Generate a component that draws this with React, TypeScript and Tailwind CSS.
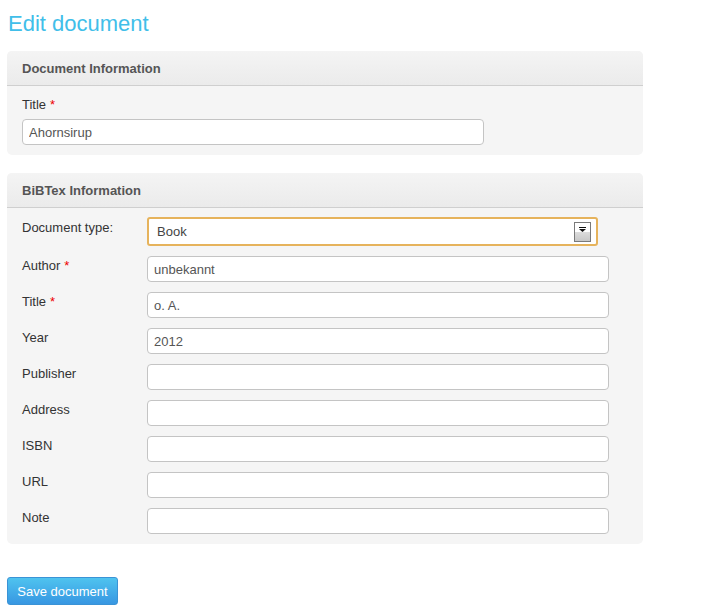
import React from "react";

const font = { fontFamily: '"Liberation Sans", Arial, sans-serif' };

function Req() {
  return <span className="ml-[4px] text-[#e00]">*</span>;
}

function Panel({ title, children, className = "" }: { title: string; children: React.ReactNode; className?: string }) {
  return (
    <section className={`w-[636px] overflow-hidden rounded-[5px] bg-[#f5f5f5] ${className}`}>
      <header className="flex h-[35px] items-center border-b border-[#cfcfcf] bg-gradient-to-b from-[#f4f4f4] to-[#ebebeb] px-[15px] pt-[2px] text-[13px] font-bold text-[#555]">
        {title}
      </header>
      {children}
    </section>
  );
}

function TextInput({ value = "" }: { value?: string }) {
  return (
    <input
      readOnly
      value={value}
      className="h-[26px] w-[462px] rounded-[4px] border border-[#c4c4c4] bg-white px-[6px] pt-[1px] text-[13px] text-[#555] outline-none"
      style={font}
    />
  );
}

const rows: { label: string; required?: boolean; value?: string }[] = [
  { label: "Author", required: true, value: "unbekannt" },
  { label: "Title", required: true, value: "o. A." },
  { label: "Year", value: "2012" },
  { label: "Publisher" },
  { label: "Address" },
  { label: "ISBN" },
  { label: "URL" },
  { label: "Note" },
];

export default function App() {
  return (
    <div className="min-h-[616px] w-[710px] bg-white pl-[7px] text-[13px] leading-[18px] text-[#333]" style={font}>
      <h1 className="pl-[1px] pt-[11px] text-[22px] font-normal leading-[26px] text-[#41bee9]">Edit document</h1>

      <Panel title="Document Information" className="mt-[14px]">
        <div className="px-[15px] pb-[10px] pt-[10px]">
          <div>
            Title
            <Req />
          </div>
          <input
            readOnly
            value="Ahornsirup"
            className="mt-[5px] h-[26px] w-[462px] rounded-[4px] border border-[#c4c4c4] bg-white px-[6px] pt-[1px] text-[13px] text-[#555] outline-none"
            style={font}
          />
        </div>
      </Panel>

      <Panel title="BiBTex Information" className="mt-[18px]">
        <div className="flex flex-col gap-[10px] px-[15px] pb-[10px] pt-[9px]">
          <div className="flex">
            <div className="w-[125px] pt-[2px]">Document type:</div>
            <div className="flex h-[29px] w-[451px] items-center justify-between rounded-[3px] border-2 border-[#e6b35c] bg-white pl-[8px] pr-[5px] pt-[1px] text-[13px] text-[#444]">
              <span>Book</span>
              <span className="flex h-[20px] w-[17px] flex-col border border-[#7a7a7a]">
                <span className="flex h-[9px] items-end justify-center bg-white">
                  <svg width="7" height="5" viewBox="0 0 7 5">
                    <rect x="0" y="0" width="7" height="1" fill="#111" />
                    <path d="M0 2h7L3.5 5z" fill="#111" />
                  </svg>
                </span>
                <span className="flex-1 bg-gradient-to-b from-[#dcdcdc] to-[#c8c8c8]" />
              </span>
            </div>
          </div>
          {rows.map((r) => (
            <div key={r.label} className="flex">
              <div className="w-[125px] pt-[1px]">
                {r.label}
                {r.required && <Req />}
              </div>
              <TextInput value={r.value} />
            </div>
          ))}
        </div>
      </Panel>

      <button
        className="mt-[33px] h-[28px] w-[111px] rounded-[3px] border border-[#3a93d6] bg-gradient-to-b from-[#4fc3ef] to-[#3897e2] pt-[1px] text-[13px] text-white"
        style={font}
      >
        Save document
      </button>
    </div>
  );
}
